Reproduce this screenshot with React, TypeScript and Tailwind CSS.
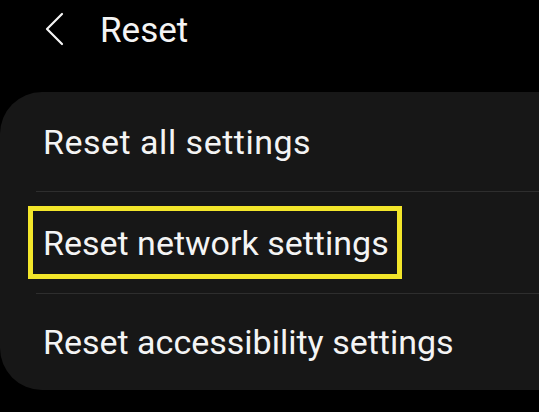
export default function App() {
  const font = { fontFamily: "Roboto, 'Liberation Sans', sans-serif" };

  return (
    <div
      className="w-[539px] h-[412px] bg-black text-[#f4f4f4] overflow-hidden"
      style={font}
    >
      {/* header */}
      <div className="h-[92px] flex items-start">
        <svg
          width="20"
          height="34"
          viewBox="0 0 20 34"
          className="ml-[44px] mt-[12px]"
          fill="none"
          stroke="#f4f4f4"
          strokeWidth="2.2"
          strokeLinecap="round"
          strokeLinejoin="round"
        >
          <path d="M18 2 L3 17 L18 32" />
        </svg>
        <h1 className="ml-[36px] mt-[13px] text-[35px] leading-none font-normal">
          Reset
        </h1>
      </div>

      {/* list panel */}
      <div className="h-[298px] bg-[#171717] rounded-l-[42px] flex flex-col">
        <div className="h-[99px] flex items-center pl-[43px]">
          <span className="text-[34px] leading-none tracking-[0.5px]">
            Reset all settings
          </span>
        </div>
        <div className="h-px bg-[#2e2e2e] ml-[36px]" />
        <div className="h-[101px] flex items-center pl-[28px]">
          <span className="inline-block border-[5px] border-[#f3e62a] pl-[10px] pr-[8px] pt-[15px] pb-[14px] text-[34px] leading-none">
            Reset network settings
          </span>
        </div>
        <div className="h-px bg-[#2e2e2e] ml-[36px]" />
        <div className="flex-1 flex items-center pl-[43px]">
          <span className="text-[34px] leading-none">
            Reset accessibility settings
          </span>
        </div>
      </div>
    </div>
  );
}
